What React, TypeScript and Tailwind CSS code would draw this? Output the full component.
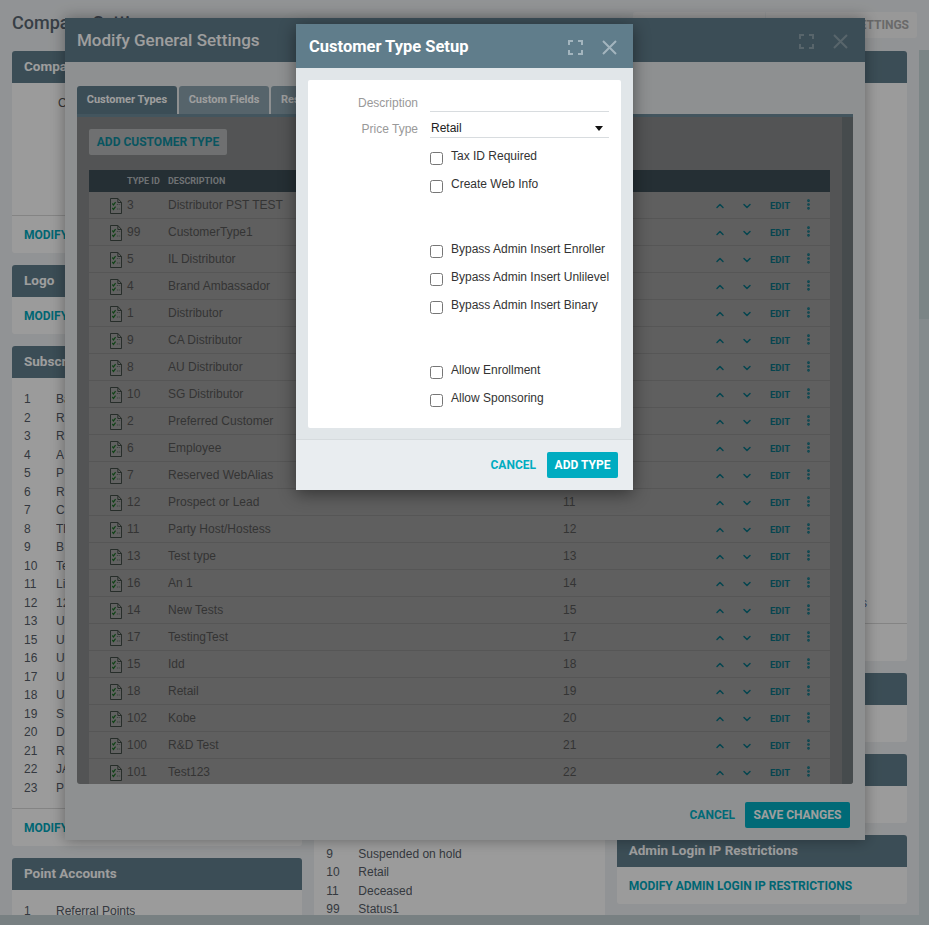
import { ChevronDown, ChevronUp, EllipsisVertical } from 'lucide-react';
import type { ReactNode } from 'react';

const customerTypes = [
  ['3', 'Distributor PST TEST', ''],
  ['99', 'CustomerType1', ''],
  ['5', 'IL Distributor', ''],
  ['4', 'Brand Ambassador', ''],
  ['1', 'Distributor', ''],
  ['9', 'CA Distributor', ''],
  ['8', 'AU Distributor', ''],
  ['10', 'SG Distributor', ''],
  ['2', 'Preferred Customer', ''],
  ['6', 'Employee', ''],
  ['7', 'Reserved WebAlias', ''],
  ['12', 'Prospect or Lead', '11'],
  ['11', 'Party Host/Hostess', '12'],
  ['13', 'Test type', '13'],
  ['16', 'An 1', '14'],
  ['14', 'New Tests', '15'],
  ['17', 'TestingTest', '17'],
  ['15', 'Idd', '18'],
  ['18', 'Retail', '19'],
  ['102', 'Kobe', '20'],
  ['100', 'R&D Test', '21'],
  ['101', 'Test123', '22'],
];

const subscriptions = [
  ['1', 'Ba'], ['2', 'R'], ['3', 'R'], ['4', 'A'], ['5', 'P'], ['6', 'R'], ['7', 'C'], ['8', 'Th'],
  ['9', 'B'], ['10', 'Te'], ['11', 'Li'], ['12', '12'], ['13', 'U'], ['15', 'U'], ['16', 'U'], ['17', 'U'],
  ['18', 'U'], ['19', 'S'], ['20', 'D'], ['21', 'R'], ['22', 'JA'], ['23', 'P'],
];

const statuses = [
  ['9', 'Suspended on hold'],
  ['10', 'Retail'],
  ['11', 'Deceased'],
  ['99', 'Status1'],
];

function Panel({ title, children, className = '' }: { title: string; children: ReactNode; className?: string }) {
  return (
    <div className={`flex flex-col rounded-[3px] bg-[#fbfbfb] ${className}`}>
      <div className="flex h-8 shrink-0 items-center rounded-t-[3px] bg-[#607d8b] px-3 pb-px font-['Roboto'] text-[13.5px] font-bold text-white">
        {title}
      </div>
      {children}
    </div>
  );
}

function PanelLink({ label, bordered = false }: { label: string; bordered?: boolean }) {
  return (
    <div className={`flex h-[37px] shrink-0 items-center px-3 pt-px font-['Roboto'] text-[12px] font-bold text-[#00a5ba] ${bordered ? 'border-t border-[#d5d5d5]' : ''}`}>
      {label}
    </div>
  );
}

function ListRow({ id, text }: { id: string; text: string }) {
  return (
    <div className="flex h-[18.5px] items-center px-3 text-[12px] text-[#555b66]">
      <span className="w-8 shrink-0">{id}</span>
      <span className="truncate">{text}</span>
    </div>
  );
}

function WindowButtons({ color }: { color: string }) {
  return (
    <div className="flex items-center gap-[19px] pt-[2px]" style={{ color }}>
      <svg width="15" height="15" viewBox="0 0 15 15" fill="none" stroke="currentColor" strokeWidth="2">
        <path d="M1 5V1H5M10 1H14V5M14 10V14H10M5 14H1V10" />
      </svg>
      <svg width="15" height="15" viewBox="0 0 15 15" fill="none" stroke="currentColor" strokeWidth="2">
        <path d="M1 1L14 14M14 1L1 14" />
      </svg>
    </div>
  );
}

function ChecklistIcon() {
  return (
    <svg width="12" height="16" viewBox="0 0 13 16" fill="none" preserveAspectRatio="none" className="shrink-0">
      <path d="M.5.5H8.5L12.5 4.5V15.5H.5Z" fill="#9e9f9e" stroke="#3a463f" />
      <path d="M8.5.5V4.5H12.5" stroke="#3a463f" />
      <path d="M2.5 5.5L3.8 7L6 4.2M2.5 10L3.8 11.5L6 8.7" stroke="#1a6b25" strokeWidth="1.3" />
      <path d="M7.5 6.5H11M7.5 11H11" stroke="#5c6a64" strokeDasharray="1.5 1" />
    </svg>
  );
}

function TypeRow({ id, name, sort }: { id: string; name: string; sort: string }) {
  return (
    <div className="flex h-[27px] shrink-0 items-center border-b border-[#8b8b8b] bg-[#9a9a9a] text-[12px] text-[#555]">
      <div className="flex w-[38px] shrink-0 justify-end pt-[2px] pr-[5px]">
        <ChecklistIcon />
      </div>
      <span className="w-[41px] shrink-0">{id}</span>
      <span className="w-[395px] shrink-0">{name}</span>
      <span className="w-[150px] shrink-0">{sort}</span>
      <div className="flex items-center pt-[2px] text-[#0a7080]">
        <ChevronUp size={12} strokeWidth={3} className="ml-px" />
        <ChevronDown size={12} strokeWidth={3} className="ml-[15px]" />
        <span className="ml-[17px] w-[20px] font-['Roboto'] text-[9.5px] font-bold">EDIT</span>
        <EllipsisVertical size={13} strokeWidth={3} className="ml-[12px] -translate-y-[2px]" />
      </div>
    </div>
  );
}

function CheckRow({ label }: { label: string }) {
  return (
    <label className="flex h-7 items-center gap-[8px] text-[12px] whitespace-nowrap text-[#333]">
      <input type="checkbox" className="m-0 h-[13px] w-[13px] translate-y-[2px]" />
      <span>{label}</span>
    </label>
  );
}

export default function App() {
  return (
    <div className="relative h-screen w-screen overflow-hidden bg-[#ebeef0] font-['Liberation_Sans',sans-serif]">
      <div className="w-[919px] px-3">
        <div className="flex h-[51px] items-start justify-between pt-3">
          <h1 className="font-['Roboto'] text-[18px] leading-[22px] font-medium text-[#5a6672]">Company Settings</h1>
          <div className="-mr-[10px] flex h-[26px] gap-px font-['Roboto'] text-[12px] font-bold text-[#ababab]">
            <div className="flex w-[132px] items-center justify-center rounded-l-[3px] bg-[#f6f6f6]">ACTIONS</div>
            <div className="flex w-[151px] items-center justify-end rounded-r-[3px] bg-[#f6f6f6] pr-2">GENERAL SETTINGS</div>
          </div>
        </div>

        <div className="grid grid-cols-3 items-start gap-3">
          <div className="flex flex-col gap-3">
            <Panel title="Company">
              <div className="h-[132px] pt-[11px] pl-[46px] text-[12px] text-[#555]">C</div>
              <PanelLink label="MODIFY" bordered />
              <div className="h-px" />
            </Panel>
            <Panel title="Logo">
              <PanelLink label="MODIFY" />
            </Panel>
            <Panel title="Subscriptions">
              <div className="pt-[12px] pb-[11px]">
                {subscriptions.map(([id, text]) => (
                  <ListRow key={id} id={id} text={text} />
                ))}
              </div>
              <PanelLink label="MODIFY" bordered />
              <div className="h-px" />
            </Panel>
            <Panel title="Point Accounts">
              <div className="pt-[12px]">
                <ListRow id="1" text="Referral Points" />
              </div>
            </Panel>
          </div>

          <Panel title="Customer Statuses" className="h-[879px] justify-between">
            <div className="pb-[11.5px]">
              {statuses.map(([id, text]) => (
                <ListRow key={id} id={id} text={text} />
              ))}
            </div>
          </Panel>

          <div className="flex flex-col gap-3">
            <Panel title="Settings">
              <div className="flex h-[540px] items-end justify-end pr-[40px] pb-[11px] text-[12px] text-[#5a6c92]">s</div>
              <PanelLink label="MODIFY" bordered />
              <div className="h-px" />
            </Panel>
            <Panel title="Options">
              <PanelLink label="MODIFY" />
            </Panel>
            <Panel title="Options">
              <PanelLink label="MODIFY" />
            </Panel>
            <Panel title="Admin Login IP Restrictions">
              <PanelLink label="MODIFY ADMIN LOGIN IP RESTRICTIONS" />
            </Panel>
          </div>
        </div>
      </div>

      {/* General settings dialog, sits below the dim layer */}
      <div className="absolute top-[18px] left-[65px] flex h-[822px] w-[800px] flex-col bg-[#e6e9eb] shadow-[0_0_14px_rgba(0,0,0,0.35)]">
        <div className="flex h-11 shrink-0 items-center justify-between bg-[#607d8b] pr-[17px] pl-3 font-['Roboto'] text-[17px] font-medium text-white">
          <span className="pt-[2px]">Modify General Settings</span>
          <WindowButtons color="#8ea3ad" />
        </div>
        <div className="flex min-h-0 flex-1 flex-col px-3 pt-6">
          <div className="flex h-7 shrink-0 gap-[2px] font-['Roboto'] text-[11px] font-bold text-white">
            <div className="flex w-[100px] items-center justify-center rounded-t-[3px] bg-[#607d8b]">Customer Types</div>
            <div className="flex w-[90px] items-center justify-center rounded-t-[3px] bg-[#8ba2ad]">Custom Fields</div>
            <div className="flex w-[90px] items-center rounded-t-[3px] bg-[#8ba2ad] pl-[10px]">Rest</div>
          </div>
          <div className="flex min-h-0 flex-1 overflow-hidden rounded-b-[3px] border-t-[3px] border-[#6d8a98] bg-[#868889]">
            <div className="flex min-w-0 flex-1 flex-col overflow-hidden px-3 pt-3">
              <button className="h-[26px] w-[138px] shrink-0 rounded-[2px] bg-[#b3b5b6] font-['Roboto'] text-[12px] font-bold text-[#108a9b]">
                ADD CUSTOMER TYPE
              </button>
              <div className="mt-[15px] flex h-[22px] shrink-0 items-center bg-[#3c4c54] pt-px pl-[38px] font-['Roboto'] text-[9px] font-bold text-[#b4b9bc]">
                <span className="w-[41px]">TYPE ID</span>
                <span>DESCRIPTION</span>
              </div>
              {customerTypes.map(([id, name, sort]) => (
                <TypeRow key={id + name} id={id} name={name} sort={sort} />
              ))}
            </div>
            <div className="w-[11px] shrink-0 bg-[#727a7c]" />
          </div>
        </div>
        <div className="flex h-14 shrink-0 items-center justify-end gap-[10px] pt-[6px] pr-[15px] font-['Roboto'] text-[12px] font-bold">
          <span className="text-[#00acc1]">CANCEL</span>
          <button className="h-[26px] w-[105px] rounded-[2px] bg-[#00acc1] text-white">SAVE CHANGES</button>
        </div>
      </div>

      <div className="absolute inset-0 bg-black/[.38]" />

      {/* scrollbars */}
      <div className="absolute top-[50px] right-0 h-[269px] w-[10px] bg-[#7b8586]" />
      <div className="absolute top-[319px] right-0 bottom-0 w-[10px] bg-[#848b8d]" />
      <div className="absolute bottom-0 left-0 h-[10px] w-[860px] bg-[#788082]" />
      <div className="absolute bottom-0 left-[860px] h-[10px] w-[59px] bg-[#848b8d]" />

      {/* Customer type dialog */}
      <div className="absolute top-6 left-[296px] flex h-[466px] w-[337px] flex-col bg-[#e1e6e9] shadow-[0_4px_16px_rgba(0,0,0,0.45)]">
        <div className="flex h-11 shrink-0 items-center justify-between bg-[#607d8b] pr-[16px] pl-[13px] font-['Roboto'] text-[16.5px] font-bold text-white">
          <span className="pt-[2px]">Customer Type Setup</span>
          <WindowButtons color="#a3b5be" />
        </div>
        <div className="flex-1 p-3 pb-0">
          <div className="h-[348px] rounded-[2px] bg-white pt-[14px]">
            <div className="grid grid-cols-[110px_179px] gap-x-3 gap-y-2 text-[12px]">
              <span className="h-[18px] text-right leading-[18px] text-[#999]">Description</span>
              <input className="h-[18px] border-b border-[#d8dcdf] outline-none" />
              <span className="h-[18px] text-right leading-[18px] text-[#999]">Price Type</span>
              <div className="relative h-[18px]">
                <select className="block h-[18px] w-full appearance-none border-0 border-b border-[#d8dcdf] bg-white pb-[1px] pl-px text-[12px] leading-[14px] text-[#222] outline-none">
                  <option>Retail</option>
                </select>
                <svg width="8" height="5" viewBox="0 0 8 5" className="absolute top-[6px] right-[6px]">
                  <path d="M0 0H8L4 5Z" fill="#111" />
                </svg>
              </div>
            </div>
            <div className="mt-1 pl-[122px]">
              <CheckRow label="Tax ID Required" />
              <CheckRow label="Create Web Info" />
              <div className="h-[37px]" />
              <CheckRow label="Bypass Admin Insert Enroller" />
              <CheckRow label="Bypass Admin Insert Unlilevel" />
              <CheckRow label="Bypass Admin Insert Binary" />
              <div className="h-[37px]" />
              <CheckRow label="Allow Enrollment" />
              <CheckRow label="Allow Sponsoring" />
            </div>
          </div>
        </div>
        <div className="flex h-[51px] shrink-0 items-center justify-end gap-[11px] border-t border-[#d6dbde] bg-[#e9edf0] pr-[15px] font-['Roboto'] text-[12px] font-bold">
          <span className="text-[#00acc1]">CANCEL</span>
          <button className="h-[26px] w-[71px] rounded-[2px] bg-[#00acc1] text-white">ADD TYPE</button>
        </div>
      </div>
    </div>
  );
}
